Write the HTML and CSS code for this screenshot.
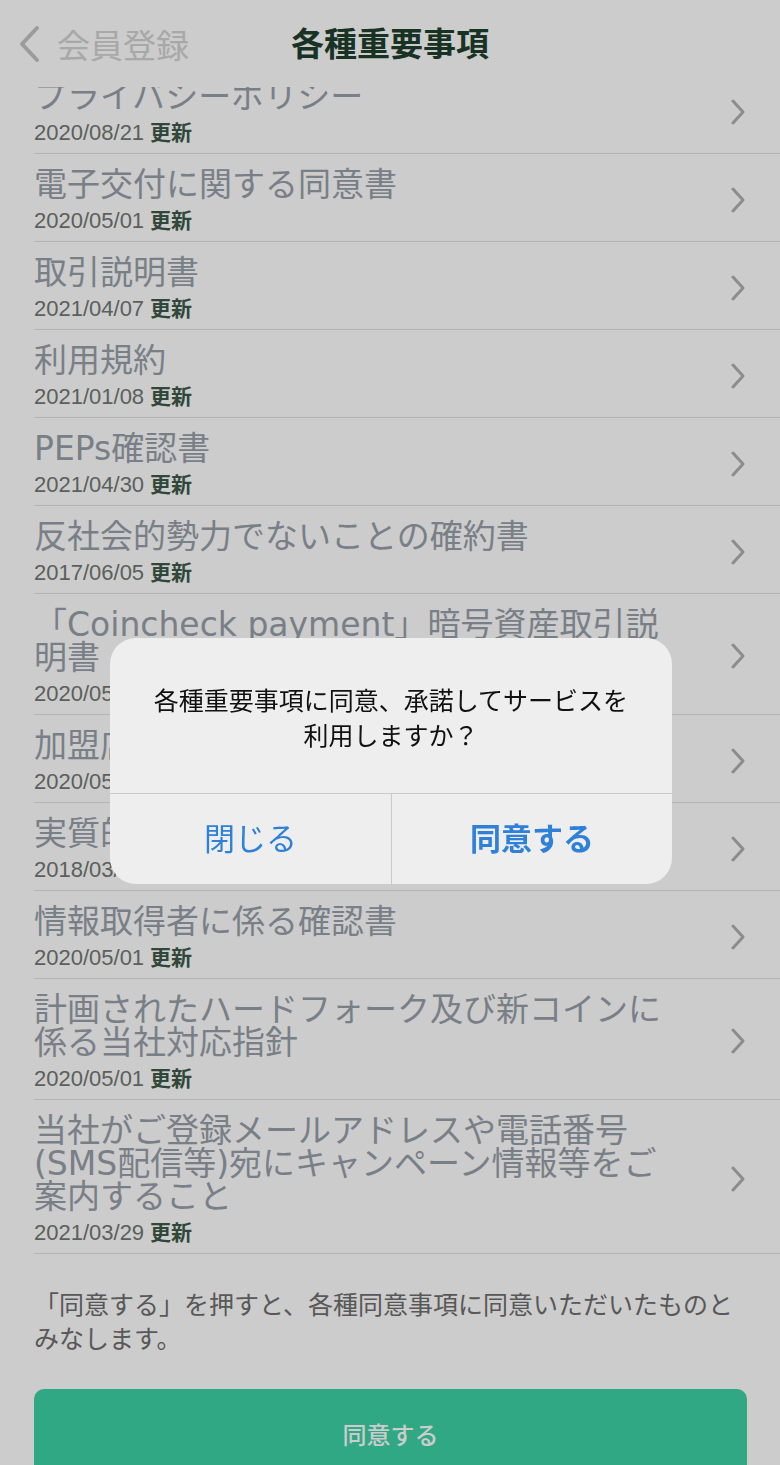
FILE: index.html
```html
<!DOCTYPE html>
<html lang="ja">
<head>
    <meta charset="UTF-8">
    <meta name="viewport" content="width=device-width, initial-scale=1.0">
    <title>各種重要事項</title>
    <link rel="stylesheet" href="styles.css">
</head>
<body>
    <!-- Navigation bar -->
    <header class="nav">
        <a class="nav-back" href="#">
            <svg class="nav-back-icon" viewBox="0 0 24 38" width="24" height="38">
                <path d="M20 3 L5 19 L20 35" fill="none" stroke="currentColor" stroke-width="4" stroke-linecap="round" stroke-linejoin="round"/>
            </svg>
            <span>会員登録</span>
        </a>
        <h1 class="nav-title">各種重要事項</h1>
        <span></span>
    </header>

    <main class="content">
        <ul class="doc-list">
            <li class="doc"><div class="doc-text"><p class="doc-title">プライバシーポリシー</p><p class="doc-date">2020/08/21 <b>更新</b></p></div><svg class="chev" viewBox="0 0 14 26" width="14" height="26"><path d="M2 2 L12 13 L2 24" /></svg></li>
            <li class="doc"><div class="doc-text"><p class="doc-title">電子交付に関する同意書</p><p class="doc-date">2020/05/01 <b>更新</b></p></div><svg class="chev" viewBox="0 0 14 26" width="14" height="26"><path d="M2 2 L12 13 L2 24" /></svg></li>
            <li class="doc"><div class="doc-text"><p class="doc-title">取引説明書</p><p class="doc-date">2021/04/07 <b>更新</b></p></div><svg class="chev" viewBox="0 0 14 26" width="14" height="26"><path d="M2 2 L12 13 L2 24" /></svg></li>
            <li class="doc"><div class="doc-text"><p class="doc-title">利用規約</p><p class="doc-date">2021/01/08 <b>更新</b></p></div><svg class="chev" viewBox="0 0 14 26" width="14" height="26"><path d="M2 2 L12 13 L2 24" /></svg></li>
            <li class="doc"><div class="doc-text"><p class="doc-title">PEPs確認書</p><p class="doc-date">2021/04/30 <b>更新</b></p></div><svg class="chev" viewBox="0 0 14 26" width="14" height="26"><path d="M2 2 L12 13 L2 24" /></svg></li>
            <li class="doc"><div class="doc-text"><p class="doc-title">反社会的勢力でないことの確約書</p><p class="doc-date">2017/06/05 <b>更新</b></p></div><svg class="chev" viewBox="0 0 14 26" width="14" height="26"><path d="M2 2 L12 13 L2 24" /></svg></li>
            <li class="doc"><div class="doc-text"><p class="doc-title">「Coincheck payment」暗号資産取引説明書</p><p class="doc-date">2020/05/01 <b>更新</b></p></div><svg class="chev" viewBox="0 0 14 26" width="14" height="26"><path d="M2 2 L12 13 L2 24" /></svg></li>
            <li class="doc"><div class="doc-text"><p class="doc-title">加盟店規約</p><p class="doc-date">2020/05/01 <b>更新</b></p></div><svg class="chev" viewBox="0 0 14 26" width="14" height="26"><path d="M2 2 L12 13 L2 24" /></svg></li>
            <li class="doc"><div class="doc-text"><p class="doc-title">実質的支配者の申告書</p><p class="doc-date">2018/03/01 <b>更新</b></p></div><svg class="chev" viewBox="0 0 14 26" width="14" height="26"><path d="M2 2 L12 13 L2 24" /></svg></li>
            <li class="doc"><div class="doc-text"><p class="doc-title">情報取得者に係る確認書</p><p class="doc-date">2020/05/01 <b>更新</b></p></div><svg class="chev" viewBox="0 0 14 26" width="14" height="26"><path d="M2 2 L12 13 L2 24" /></svg></li>
            <li class="doc"><div class="doc-text"><p class="doc-title">計画されたハードフォーク及び新コインに係る当社対応指針</p><p class="doc-date">2020/05/01 <b>更新</b></p></div><svg class="chev" viewBox="0 0 14 26" width="14" height="26"><path d="M2 2 L12 13 L2 24" /></svg></li>
            <li class="doc"><div class="doc-text"><p class="doc-title">当社がご登録メールアドレスや電話番号(SMS配信等)宛にキャンペーン情報等をご案内すること</p><p class="doc-date">2021/03/29 <b>更新</b></p></div><svg class="chev" viewBox="0 0 14 26" width="14" height="26"><path d="M2 2 L12 13 L2 24" /></svg></li>
        </ul>

        <p class="note">「同意する」を押すと、各種同意事項に同意いただいたものとみなします。</p>
        <button class="agree-btn">同意する</button>
    </main>

    <!-- Confirm alert -->
    <div class="overlay">
        <div class="alert">
            <p class="alert-msg">各種重要事項に同意、承諾してサービスを利用しますか？</p>
            <div class="alert-actions">
                <button class="alert-btn">閉じる</button>
                <button class="alert-btn alert-btn-main">同意する</button>
            </div>
        </div>
    </div>
</body>
</html>
```

FILE: styles.css
```css
/* Base */
body {
    margin: 0;
    padding: 0;
    height: 100vh;
    overflow: hidden;
    background: #fff;
    font-family: "Noto Sans CJK JP", sans-serif;
    color: #222;
}

p {
    margin: 0;
}

/* Navigation bar */
.nav {
    height: 87px;
    display: grid;
    grid-template-columns: 1fr auto 1fr;
    align-items: center;
    background: #fff;
}

.nav-back {
    display: flex;
    align-items: center;
    gap: 16px;
    padding-left: 17px;
    color: #d2d2d2;
    text-decoration: none;
    font-size: 33px;
    white-space: nowrap;
}

.nav-back-icon {
    color: #c2c2c2;
}

.nav-title {
    margin: 0 0 4px;
    font-size: 33px;
    font-weight: 700;
    color: #1f3f2e;
}

/* Document list */
.content {
    overflow: hidden;
}

.doc-list {
    list-style: none;
    margin: -21px 0 0 34px;
    padding: 0;
}

.doc {
    display: flex;
    align-items: center;
    padding: 14px 35px 10px 0;
    border-bottom: 1px solid #e1e1e1;
}

.doc-text {
    flex: 1;
}

.doc-title {
    font-family: "DejaVu Sans", "Noto Sans CJK JP", sans-serif;
    font-size: 33px;
    line-height: 33px;
    color: #989fa9;
}

.doc-date {
    display: flex;
    align-items: baseline;
    gap: 6px;
    height: 24px;
    margin-top: 6px;
    font-family: "Liberation Sans", "Noto Sans CJK JP", sans-serif;
    font-size: 22px;
    line-height: 24px;
    color: #727873;
}

.doc-date b {
    font-family: "Noto Sans CJK JP", sans-serif;
    font-size: 21px;
    color: #3d5949;
}

.chev {
    margin-left: 50px;
    flex-shrink: 0;
}

.chev path {
    fill: none;
    stroke: #b0b0b0;
    stroke-width: 3;
    stroke-linecap: round;
    stroke-linejoin: round;
}

/* Footer */
.note {
    padding: 32px 34px 0;
    font-size: 25px;
    line-height: 34px;
    color: #6e6e6e;
}

.agree-btn {
    display: block;
    width: 713px;
    height: 88px;
    margin: 35px 0 0 34px;
    border: none;
    border-radius: 10px;
    background: #3bd2a4;
    color: #fff;
    font-family: "Noto Sans CJK JP", sans-serif;
    font-size: 24px;
    font-weight: 500;
}

/* Dimmed backdrop + alert */
.overlay {
    position: fixed;
    top: 0;
    left: 0;
    right: 0;
    bottom: 0;
    background: rgba(0, 0, 0, 0.2);
    display: flex;
    justify-content: center;
    align-items: center;
    padding-top: 56px;
    padding-left: 2px;
}

.alert {
    width: 562px;
    background: #eeeeee;
    border-radius: 26px;
    overflow: hidden;
}

.alert-msg {
    padding: 44px 36px 41px;
    text-align: center;
    font-size: 25px;
    line-height: 35px;
    color: #111;
}

.alert-actions {
    display: grid;
    grid-template-columns: 1fr 1fr;
    border-top: 1px solid #c9c9c9;
}

.alert-btn {
    height: 90px;
    padding: 0 0 4px;
    border: none;
    background: transparent;
    color: #2f80d9;
    font-family: "Noto Sans CJK JP", sans-serif;
    font-size: 31px;
}

.alert-btn + .alert-btn {
    border-left: 1px solid #c9c9c9;
}

.alert-btn-main {
    font-weight: 700;
}
```
